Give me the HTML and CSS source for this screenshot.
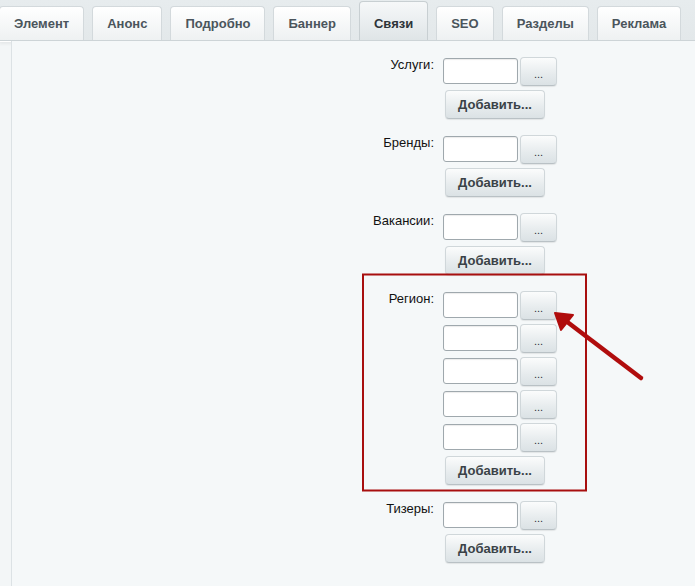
FILE: index.html
```html
<!DOCTYPE html>
<html lang="ru">

<head>
    <meta charset="UTF-8">
    <title>Связи элемента</title>
    <link rel="stylesheet" href="styles.css">
</head>

<body>
    <header class="tabs">
        <span class="tab">Элемент</span>
        <span class="tab">Анонс</span>
        <span class="tab">Подробно</span>
        <span class="tab">Баннер</span>
        <span class="tab active">Связи</span>
        <span class="tab">SEO</span>
        <span class="tab">Разделы</span>
        <span class="tab">Реклама</span>
    </header>

    <main class="panel">
        <div class="field">
            <label class="field-name">Услуги:</label>
            <div class="field-values">
                <div class="value-row"><input class="link-input" type="text"><button class="pick">...</button></div>
                <button class="add">Добавить...</button>
            </div>
        </div>
        <div class="field">
            <label class="field-name">Бренды:</label>
            <div class="field-values">
                <div class="value-row"><input class="link-input" type="text"><button class="pick">...</button></div>
                <button class="add">Добавить...</button>
            </div>
        </div>
        <div class="field">
            <label class="field-name">Вакансии:</label>
            <div class="field-values">
                <div class="value-row"><input class="link-input" type="text"><button class="pick">...</button></div>
                <button class="add">Добавить...</button>
            </div>
        </div>
        <div class="field">
            <label class="field-name">Регион:</label>
            <div class="field-values">
                <div class="value-row"><input class="link-input" type="text"><button class="pick">...</button></div>
                <div class="value-row"><input class="link-input" type="text"><button class="pick">...</button></div>
                <div class="value-row"><input class="link-input" type="text"><button class="pick">...</button></div>
                <div class="value-row"><input class="link-input" type="text"><button class="pick">...</button></div>
                <div class="value-row"><input class="link-input" type="text"><button class="pick">...</button></div>
                <button class="add">Добавить...</button>
            </div>
        </div>
        <div class="field">
            <label class="field-name">Тизеры:</label>
            <div class="field-values">
                <div class="value-row"><input class="link-input" type="text"><button class="pick">...</button></div>
                <button class="add">Добавить...</button>
            </div>
        </div>

        <!-- пометка: рамка вокруг поля "Регион" и стрелка на кнопку выбора -->
        <svg class="note" width="695" height="586" viewBox="0 0 695 586">
            <rect x="363" y="274.5" width="223" height="216" fill="none" stroke="#a80f0f" stroke-width="2" />
            <line x1="641" y1="378" x2="566" y2="321" stroke="#b00d0d" stroke-width="4.5" stroke-linecap="round" />
            <polygon points="555,313 573,315 561,330" fill="#b00d0d" stroke="#b00d0d" stroke-width="2" stroke-linejoin="round" />
        </svg>
    </main>
</body>

</html>
```

FILE: styles.css
```css
body {
    margin: 0;
    background-color: #f3f6f7;
    font-family: "Liberation Sans", Arial, sans-serif;
    font-size: 13px;
    position: relative;
    min-height: 586px;
}

.tabs {
    display: flex;
    align-items: flex-end;
    gap: 8px;
    height: 40px;
    margin-left: -1px;
    background: linear-gradient(#e7ecee, #e3e8ea);
    border-bottom: 1px solid #cdd4d7;
    box-shadow: 0 1px 0 #ffffff, 0 3px 3px rgba(0, 0, 0, .06);
    overflow: hidden;
}

.tab {
    height: 33px;
    line-height: 33px;
    padding: 0 14px;
    font-weight: bold;
    color: #4b555c;
    background: linear-gradient(#ffffff, #eef1f2);
    border: 1px solid #d3d9dc;
    border-bottom: none;
    border-radius: 4px 4px 0 0;
    white-space: nowrap;
}

.tab.active {
    height: 38px;
    line-height: 43px;
    color: #2e3439;
    background: linear-gradient(#f6f8f9, #dfe5e7);
    border-color: #c8cfd2;
}

.panel {
    margin-left: 11px;
    padding-top: 16px;
    padding-bottom: 20px;
    background-color: #f5f8f9;
    border-left: 1px solid #dce2e5;
    min-height: 530px;
}

.field {
    display: grid;
    grid-template-columns: 423px auto;
    column-gap: 8px;
    margin-bottom: 16px;
}

.field-name {
    text-align: right;
    padding-right: 1px;
    line-height: 16px;
    color: #111;
}

.field-values {
    display: flex;
    flex-direction: column;
    align-items: flex-start;
    gap: 4px;
}

.value-row {
    display: flex;
    align-items: flex-start;
    gap: 2px;
    height: 29px;
}

.link-input {
    box-sizing: border-box;
    width: 75px;
    height: 26px;
    margin: 1px 0 0 0;
    padding: 0 4px;
    background: #ffffff;
    border: 1px solid #9fa8ad;
    border-radius: 3px;
    box-shadow: inset 0 1px 1px rgba(0, 0, 0, .08);
}

.pick,
.add {
    box-sizing: border-box;
    height: 29px;
    margin: 0;
    font-family: "Liberation Sans", Arial, sans-serif;
    background: linear-gradient(#fbfcfc, #e6ebed 60%, #dbe2e5);
    border: 1px solid #d0d7da;
    border-bottom-color: #b9c1c5;
    border-radius: 4px;
    box-shadow: 0 1px 1px rgba(0, 0, 0, .08);
    color: #3a4247;
}

.pick {
    width: 37px;
    padding: 4px 0 0 0;
    font-size: 11px;
    color: #2b3136;
}

.add {
    width: 100px;
    margin-left: 2px;
    padding: 0;
    font-size: 13px;
    font-weight: bold;
}

.note {
    position: absolute;
    left: 0;
    top: 0;
    pointer-events: none;
}
```
